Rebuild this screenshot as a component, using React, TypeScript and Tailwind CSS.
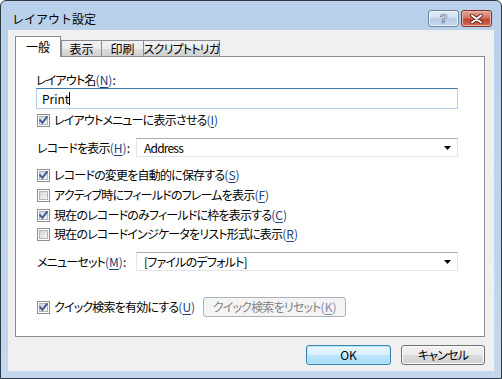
import React from "react";

const font = "font-['Noto_Sans_CJK_JP','Noto_Sans',sans-serif]";
const body = "[font-feature-settings:'palt'] tracking-[-0.8px]";

function Mn({ k }: { k: string }) {
  return (
    <span className="tracking-normal text-[#22427c]">
      (<span className="underline underline-offset-[2px]">{k}</span>)
    </span>
  );
}

function Check({ checked }: { checked?: boolean }) {
  return (
    <span className="relative flex h-[13px] w-[13px] shrink-0 items-center justify-center border border-[#8e8f8f] bg-white">
      <span className="h-[9px] w-[9px] border border-[#b0b4ba] bg-gradient-to-br from-[#d0d3d8] to-[#f6f6f7]" />
      {checked && (
        <svg className="absolute left-0 top-0" width="11" height="11" viewBox="0 0 11 11">
          <path d="M2.2 5.3 L4.4 7.8 L8.8 2.2" fill="none" stroke="#3f5595" strokeWidth="1.9" strokeLinecap="square" />
        </svg>
      )}
    </span>
  );
}

function CheckRow({ checked, label, k, className = "" }: { checked?: boolean; label: string; k: string; className?: string }) {
  return (
    <div className={`flex h-[16px] items-center gap-[4px] ${className}`}>
      <Check checked={checked} />
      <span className="whitespace-nowrap leading-[16px]">
        {label}
        <Mn k={k} />
      </span>
    </div>
  );
}

function Select({ value }: { value: string }) {
  return (
    <div className="flex h-[19px] flex-1 items-center justify-between border border-[#e2e3ea] border-t-[#abadb3] bg-white pl-[7px] pr-[6px]">
      <span className="leading-[16px]">{value}</span>
      <svg width="7" height="4" viewBox="0 0 7 4">
        <polygon points="0,0 7,0 3.5,4" fill="#000" />
      </svg>
    </div>
  );
}

function WinButton({ children, primary, disabled, w }: { children: React.ReactNode; primary?: boolean; disabled?: boolean; w: string }) {
  const base = "flex h-[20px] items-center justify-center rounded-[3px] border leading-[16px] whitespace-nowrap";
  if (disabled)
    return <div className={`${base} ${w} border-[#adb2b5] bg-[#f4f4f4] text-[#838383]`}>{children}</div>;
  if (primary)
    return (
      <div className={`${base} ${w} border-[#3c7fb1] bg-[linear-gradient(#eaf6fd_0%,#d9f0fc_50%,#bee6fd_50%,#a7d9f5_100%)] shadow-[inset_0_0_0_1px_#b5ecfb]`}>
        {children}
      </div>
    );
  return (
    <div className={`${base} ${w} border-[#707070] bg-[linear-gradient(#f2f2f2_0%,#ebebeb_50%,#dddddd_50%,#cfcfcf_100%)] shadow-[inset_0_0_0_1px_#fcfcfc]`}>
      {children}
    </div>
  );
}

const tabBg = "bg-[linear-gradient(#f2f2f2_0%,#ebebeb_50%,#dddddd_50%,#cfcfcf_100%)]";

export default function App() {
  return (
    <div className={`h-[379px] w-[502px] bg-white text-[12px] text-black ${font}`}>
      <div className="flex h-full w-full flex-col rounded-t-[6px] border border-[#2e3946] bg-gradient-to-b from-[#b9d0ea] to-[#c3d8ef] px-[7px] pb-[7px]">
        {/* title bar */}
        <div className="-mx-[7px] flex h-[29px] shrink-0 items-center justify-between pl-[11px] pr-[9px] pt-[6px]">
          <span className="leading-[16px]">レイアウト設定</span>
          <div className="flex gap-[2px]">
            <div className="flex h-[17px] w-[31px] items-center justify-center rounded-[3px] border border-[#6e839e] bg-[linear-gradient(#e4eef9_0%,#cddced_50%,#b6cbe4_50%,#c5d7ee_100%)] shadow-[inset_0_0_0_1px_#eef4fb]">
              <span className="font-['Liberation_Sans',sans-serif] text-[13px] font-bold leading-none text-white [-webkit-text-stroke:0.6px_#4a5d78]">?</span>
            </div>
            <div className="flex h-[17px] w-[31px] items-center justify-center rounded-[3px] border border-[#7a3326] bg-[linear-gradient(#e5a496_0%,#d47765_45%,#c3432e_55%,#d46a56_100%)] shadow-[inset_0_0_0_1px_#eab7ab]">
              <svg width="13" height="10" viewBox="0 0 13 10">
                <path d="M2 1.5 L11 8.5 M11 1.5 L2 8.5" stroke="#5a2219" strokeWidth="3.6" strokeLinecap="round" />
                <path d="M2 1.5 L11 8.5 M11 1.5 L2 8.5" stroke="#ffffff" strokeWidth="2" strokeLinecap="round" />
              </svg>
            </div>
          </div>
        </div>

        {/* client area */}
        <div className={`flex flex-1 flex-col bg-[#f0f0f0] pl-[7px] pr-[9px] pt-[6px] ${body}`}>
          {/* tabs */}
          <div className="flex h-[21px] items-end whitespace-nowrap">
            <div className="relative z-10 flex h-[21px] w-[46px] items-start justify-center border border-b-0 border-[#898c95] bg-white pt-[2px] leading-[16px] tracking-normal">
              一般
            </div>
            <div className={`flex h-[17px] w-[41px] items-center justify-center border border-b-0 border-[#898c95] leading-[16px] tracking-normal ${tabBg}`}>
              表示
            </div>
            <div className={`-ml-px flex h-[17px] w-[43px] items-center justify-center border border-b-0 border-[#898c95] leading-[16px] tracking-normal ${tabBg}`}>
              印刷
            </div>
            <div className={`-ml-px flex h-[17px] w-[77px] items-center justify-center border border-b-0 border-[#898c95] leading-[16px] ${tabBg}`}>
              スクリプトトリガ
            </div>
          </div>

          {/* panel */}
          <div className="-mt-px flex h-[281px] w-[470px] flex-col border border-[#898c95] bg-white pl-[20px] pr-[26px] pt-[15px]">
            <div className="h-[16px] leading-[16px]">
              レイアウト名<Mn k="N" />:
            </div>
            <div className="flex h-[21px] items-center border border-[#b5cfe7] border-t-[#3d7bad] pl-[5px]">
              <span className="leading-[16px] tracking-normal">Print</span>
              <span className="h-[13px] w-px bg-black" />
            </div>
            <CheckRow checked label="レイアウトメニューに表示させる" k="I" className="mt-[3px] pl-px" />

            <div className="mt-[10px] flex items-center">
              <span className="w-[100px] shrink-0 pl-px leading-[16px]">
                レコードを表示<Mn k="H" />:
              </span>
              <Select value="Address" />
            </div>

            <CheckRow checked label="レコードの変更を自動的に保存する" k="S" className="mt-[10px] pl-px" />
            <CheckRow label="アクティブ時にフィールドのフレームを表示" k="F" className="mt-[4px] pl-px" />
            <CheckRow checked label="現在のレコードのみフィールドに枠を表示する" k="C" className="mt-[4px] pl-px" />
            <CheckRow label="現在のレコードインジケータをリスト形式に表示" k="R" className="mt-[3px] pl-px" />

            <div className="mt-[10px] flex items-center">
              <span className="w-[100px] shrink-0 pl-px leading-[16px]">
                メニューセット<Mn k="M" />:
              </span>
              <Select value="[ファイルのデフォルト]" />
            </div>

            <div className="mt-[26px] flex items-center">
              <CheckRow checked label="クイック検索を有効にする" k="U" className="pl-px" />
              <div className="ml-[8px]">
                <WinButton disabled w="w-[143px]">
                  <span>
                    クイック検索をリセット
                    <span className="tracking-normal text-[#7f8aa8]">
                      (<span className="underline underline-offset-[2px]">K</span>)
                    </span>
                  </span>
                </WinButton>
              </div>
            </div>
          </div>

          {/* buttons */}
          <div className="mt-[8px] flex justify-end gap-[10px]">
            <WinButton primary w="w-[85px] tracking-normal">
              OK
            </WinButton>
            <WinButton w="w-[84px]">キャンセル</WinButton>
          </div>
        </div>
      </div>
    </div>
  );
}
